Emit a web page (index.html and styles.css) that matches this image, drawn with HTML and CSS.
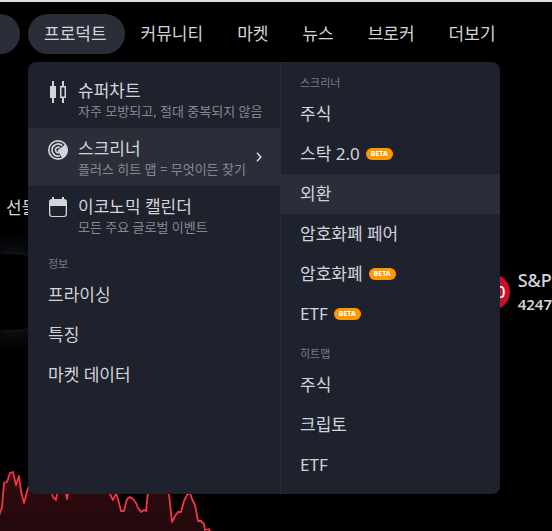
FILE: index.html
```html
<!DOCTYPE html>
<html lang="ko">
<head>
<meta charset="utf-8">
<meta name="viewport" content="width=device-width, initial-scale=1">
<title>프로덕트</title>
<link rel="stylesheet" href="styles.css">
</head>
<body>
<header class="header">
  <button class="search" type="button" aria-label="검색"></button>
  <nav>
    <ul class="nav">
      <li class="nav-item">
        <a class="nav-link active" href="#">프로덕트</a>
        <div class="menu">
          <div class="menu-main">
            <a class="feature" href="#">
              <svg class="icon" viewBox="0 0 28 28" width="28" height="28" aria-hidden="true">
                <path fill="currentColor" d="M8 3h2v5h2v12h-2v5H8v-5H6V8h2z"/>
                <path fill="currentColor" d="M18 3h2v5h2v12h-2v5h-2v-5h-2V8h2zM17.500 9.500v9h3v-9z" fill-rule="evenodd"/>
              </svg>
              <span class="feature-text"><span class="feature-title">슈퍼차트</span><span class="feature-note">자주 모방되고, 절대 중복되지 않음</span></span>
            </a>
            <a class="feature current" href="#">
              <svg class="icon" viewBox="0 0 28 28" width="28" height="28" aria-hidden="true">
                <g fill="none" stroke="currentColor" stroke-width="1.7">
                  <circle cx="14" cy="14" r="9.2"/>
                  <path d="M18.2 9.600A6 6 0 1 0 16 19.700"/>
                  <path d="M15.800 11.800A2.700 2.700 0 1 0 15 16.500"/>
                </g>
                <path fill="currentColor" d="M13.500 14.500L21.500 8.200A9.800 9.800 0 0 1 18.500 22.500z"/>
              </svg>
              <span class="feature-text"><span class="feature-title">스크리너</span><span class="feature-note">플러스 히트 맵 = 무엇이든 찾기</span></span>
              <svg class="chevron" viewBox="0 0 6 10" width="6" height="10" aria-hidden="true"><path d="M1 .8L4.800 5L1 9.200" fill="none" stroke="currentColor" stroke-width="1.6"/></svg>
            </a>
            <a class="feature" href="#">
              <svg class="icon" viewBox="0 0 28 28" width="28" height="28" aria-hidden="true">
                <path fill="currentColor" fill-rule="evenodd" d="M8 3h2v2h8V3h2v2a3 3 0 0 1 3 3v12a3 3 0 0 1-3 3H8a3 3 0 0 1-3-3V8a3 3 0 0 1 3-3zM6.300 12v8a2 2 0 0 0 2 2h11.400a2 2 0 0 0 2-2v-8z"/>
              </svg>
              <span class="feature-text"><span class="feature-title">이코노믹 캘린더</span><span class="feature-note">모든 주요 글로벌 이벤트</span></span>
            </a>
            <h2 class="menu-heading">정보</h2>
            <a class="menu-link" href="#">프라이싱</a>
            <a class="menu-link" href="#">특징</a>
            <a class="menu-link" href="#">마켓 데이터</a>
          </div>
          <div class="menu-sub">
            <h2 class="menu-heading">스크리너</h2>
            <a class="menu-link" href="#">주식</a>
            <a class="menu-link" href="#">스탁 2.0 <span class="badge">BETA</span></a>
            <a class="menu-link current" href="#">외환</a>
            <a class="menu-link" href="#">암호화폐 페어</a>
            <a class="menu-link" href="#">암호화폐 <span class="badge">BETA</span></a>
            <a class="menu-link" href="#">ETF <span class="badge">BETA</span></a>
            <h2 class="menu-heading">히트맵</h2>
            <a class="menu-link" href="#">주식</a>
            <a class="menu-link" href="#">크립토</a>
            <a class="menu-link" href="#">ETF</a>
          </div>
        </div>
      </li>
      <li><a class="nav-link" href="#">커뮤니티</a></li>
      <li><a class="nav-link" href="#">마켓</a></li>
      <li><a class="nav-link" href="#">뉴스</a></li>
      <li><a class="nav-link" href="#">브로커</a></li>
      <li><a class="nav-link" href="#">더보기</a></li>
    </ul>
  </nav>
</header>
<main>
  <div class="tabs"><a href="#">선물</a></div>
  <div class="summary">
    <div class="card"></div>
    <div class="quote">
      <span class="logo">500</span>
      <div><div class="symbol">S&amp;P</div><div class="price">4247</div></div>
    </div>
  </div>
  <svg class="chart" viewBox="0 0 552 61" height="61" preserveAspectRatio="xMinYMin slice" aria-hidden="true">
    <defs><linearGradient id="area" x1="0" y1="0" x2="0" y2="1"><stop offset="0" stop-color="#300b10"/><stop offset="1" stop-color="#20070a"/></linearGradient></defs>
    <path fill="url(#area)" stroke="#f23645" stroke-width="1.8" stroke-linejoin="round" d="M-2 48L0 43L2 37L4 13L7 12L10 3L13 2L16 15L19 6L21 21L24 33L28 18L34 8L50 16L53 27L56 30L58 18L65 18L67 29L69 16L105 14L110 24L113 30L116 23L118 29L121 41L124 41L127 29L130 27L133 29L136 33L138 38L141 42L144 40L146 41L148 22L152 12L165 12L169 24L172 52L175 46L178 42L181 42L184 31L187 25L190 23L192 29L195 35L198 51L201 51L204 54L205 60L209 59L211 64L211 80L-2 80z"/>
  </svg>
</main>
</body>
</html>
```
FILE: styles.css
```css
* {
  box-sizing: border-box;
}

body {
  margin: 0;
  min-height: 100vh;
  overflow: hidden;
  border-top: 2px solid #dcdfe2;
  background: #000;
  color: #d1d4dc;
  font: 17px/24px "Noto Sans", "Noto Sans CJK KR", sans-serif;
}

a {
  color: inherit;
  text-decoration: none;
}

.header {
  display: flex;
  gap: 8px;
  padding: 12px 0 8px;
}

.search {
  width: 40px;
  height: 40px;
  margin-left: -20px;
  border: 0;
  border-radius: 20px;
  background: #2a2e39;
}

.nav {
  display: flex;
  margin: 0;
  padding: 0;
  list-style: none;
}

.nav-item {
  position: relative;
}

.nav-link {
  display: block;
  padding: 8px 18px 8px 16px;
  border-radius: 20px;
  white-space: nowrap;
}

.nav-link.active {
  background: #2a2e39;
}

.menu {
  position: absolute;
  z-index: 2;
  top: 48px;
  left: 0;
  display: grid;
  grid-template-columns: 252px 220px;
  overflow: hidden;
  border-radius: 8px;
  background: #1e222d;
}

.menu-main {
  padding: 8px 0;
}

.menu-sub {
  padding: 1px 0 9px;
  border-left: 1px solid #2a2e39;
}

.feature {
  display: flex;
  height: 58px;
  padding: 8px 18px 0 16px;
  gap: 6px;
}

.current {
  background: #2a2e39;
}

.icon {
  flex: none;
}

.feature-text {
  flex: 1;
  min-width: 0;
  padding-top: 1px;
  white-space: nowrap;
}

.feature-title,
.feature-note {
  display: block;
}

.feature-note {
  color: #868993;
  font-size: 13px;
  line-height: 16px;
}

.chevron {
  margin-top: 16px;
}

.menu-heading {
  margin: 0;
  padding: 12px 20px 3px;
  color: #787b86;
  font-size: 11px;
  font-weight: 400;
  line-height: 16px;
}

.menu-sub .menu-heading,
.menu-sub .menu-link {
  padding-left: 19px;
}

.menu-link {
  display: flex;
  align-items: center;
  gap: 6px;
  height: 40px;
  padding: 0 20px;
}

.badge {
  padding: 0 5px;
  border-radius: 6px;
  background: #ff9800;
  color: #fff;
  font-size: 7px;
  font-weight: 800;
  line-height: 12px;
}

.tabs {
  padding: 134px 6px 34px;
}

.summary {
  display: flex;
  justify-content: space-between;
}

.card {
  width: 32px;
  height: 76px;
  border-radius: 0 12px 12px 0;
  background: #000;
  box-shadow: 0 0 2px #2a2e39, 0 0 28px #2a2e39;
}

.quote {
  display: flex;
  align-items: center;
  gap: 8px;
}

.logo {
  width: 36px;
  height: 36px;
  border-radius: 50%;
  background: #c8102e;
  color: #fff;
  font-size: 16px;
  font-weight: 500;
  line-height: 36px;
  text-align: center;
}

.symbol,
.price {
  font-weight: 500;
}

.symbol {
  font-size: 18px;
}

.price {
  font-size: 15px;
  font-weight: 600;
}

.chart {
  display: block;
  width: 100%;
  margin-top: 140px;
}
```
